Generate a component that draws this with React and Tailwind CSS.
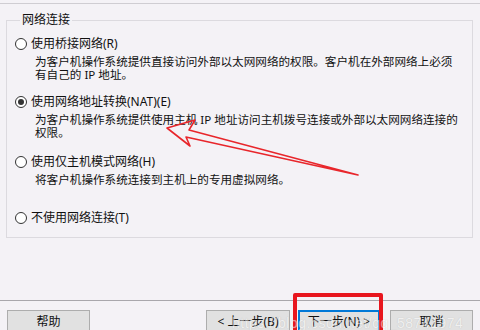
import React from "react";

const font = { fontFamily: '"Noto Sans", "Noto Sans CJK SC", sans-serif' };

const Radio = ({ checked }) => (
  <span className="mt-[2px] flex h-[12px] w-[12px] shrink-0 items-center justify-center rounded-full border border-[#333333] bg-white">
    {checked ? <span className="h-[6px] w-[6px] rounded-full bg-[#333333]" /> : null}
  </span>
);

const Option = ({ label, desc, checked, className }) => (
  <div className={className}>
    <div className="flex items-start gap-[4px] text-[12px] leading-[16px]">
      <Radio checked={checked} />
      <span>{label}</span>
    </div>
    {desc ? (
      <p className="mt-[3px] pl-[20px] text-[11.6px] leading-[13px]">{desc}</p>
    ) : null}
  </div>
);

const Button = ({ children, className }) => (
  <button
    className={
      "flex h-[23px] items-center justify-center border bg-[#e1e1e1] text-[12px] text-[#111] " +
      className
    }
  >
    {children}
  </button>
);

export default function App() {
  return (
    <div
      className="relative h-[330px] w-[480px] overflow-hidden bg-[#f4f2f6] text-[#111]"
      style={font}
    >
      <div className="pt-[3px]">
        <div className="border-t border-[#cfcdd2]" />
      </div>

      <fieldset className="ml-[6px] mt-[9px] w-[467px] border border-[#dcdadf] pb-[11px] pl-[8px]">
        <legend className="ml-[5px] px-[2px] text-[12px] leading-[14px]">网络连接</legend>

        <Option
          className="mt-[9px]"
          label="使用桥接网络(R)"
          desc={
            <>
              为客户机操作系统提供直接访问外部以太网网络的权限。客户机在外部网络上必须
              <br />
              有自己的 IP 地址。
            </>
          }
        />
        <Option
          className="mt-[13px]"
          checked
          label="使用网络地址转换(NAT)(E)"
          desc={
            <>
              为客户机操作系统提供使用主机 IP 地址访问主机拨号连接或外部以太网网络连接的
              <br />
              权限。
            </>
          }
        />
        <Option
          className="mt-[15px]"
          label="使用仅主机模式网络(H)"
          desc="将客户机操作系统连接到主机上的专用虚拟网络。"
        />
        <Option className="mt-[24px]" label="不使用网络连接(T)" />
      </fieldset>

      <div className="mt-[62px] border-t border-[#a9a7ac]" />

      <div className="mt-[9px] flex">
        <Button className="ml-[7px] w-[83px] border-[#adadad]">帮助</Button>
        <Button className="ml-[116px] w-[84px] border-[#adadad]">&lt; 上一步(B)</Button>
        <Button className="ml-[8px] w-[82px] border-[#0078d7] shadow-[inset_0_0_0_1px_#0078d7]">
          下一步(N) &gt;
        </Button>
        <Button className="ml-[10px] w-[83px] border-[#adadad]">取消</Button>
      </div>

      {/* red highlight box over the next button */}
      <div className="absolute left-[293px] top-[293px] h-[45px] w-[90px] rounded-[2px] border-[4px] border-[#e8161e]" />

      {/* red arrow pointing at the NAT description */}
      <svg className="absolute left-0 top-0" width="480" height="330" viewBox="0 0 480 330">
        <polygon
          points="167,128 195,120 189,130 358,175 186,137 190,146"
          fill="none"
          stroke="#e8262b"
          strokeWidth="1.6"
          strokeLinejoin="round"
        />
      </svg>

      {/* watermark */}
      <span
        className="absolute left-[232px] top-[313px] text-[14px] tracking-[0.5px] text-white opacity-50"
        style={{ textShadow: "0 0 1px #9a9a9a", fontFamily: '"Liberation Sans", sans-serif' }}
      >
        https://blog.csdn.net/qq_58741974
      </span>
    </div>
  );
}
